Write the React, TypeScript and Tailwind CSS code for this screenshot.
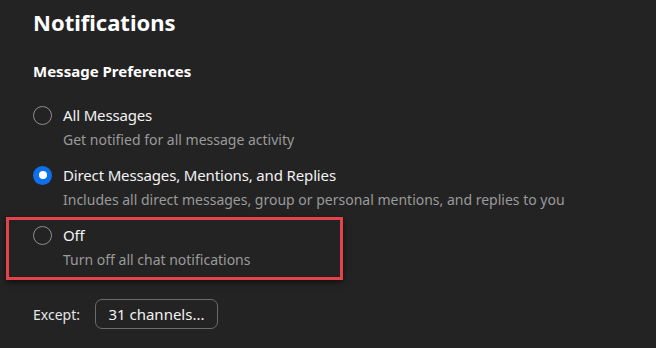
import { useState } from "react";

type Option = {
  id: string;
  label: string;
  hint: string;
};

const options: Option[] = [
  { id: "all", label: "All Messages", hint: "Get notified for all message activity" },
  {
    id: "direct",
    label: "Direct Messages, Mentions, and Replies",
    hint: "Includes all direct messages, group or personal mentions, and replies to you",
  },
  { id: "off", label: "Off", hint: "Turn off all chat notifications" },
];

const Radio = ({ checked }: { checked: boolean }) =>
  checked ? (
    <span className="w-[19px] h-[19px] rounded-full bg-[#0e71eb] flex items-center justify-center shrink-0">
      <span className="w-[8px] h-[8px] rounded-full bg-white" />
    </span>
  ) : (
    <span className="w-[19px] h-[19px] rounded-full border border-[#8f8f8f] shrink-0" />
  );

const App = () => {
  const [value, setValue] = useState("direct");

  return (
    <div className="w-[656px] h-[348px] bg-[#232323] text-white font-['Noto_Sans',sans-serif] pl-[33px] pt-[7px] overflow-hidden">
      <h1 className="text-[22px] font-bold leading-[30px]">Notifications</h1>
      <h2 className="mt-[24px] text-[15px] font-bold leading-[20px]">Message Preferences</h2>

      <div className="mt-[22px] flex flex-col">
        {options.map((opt) => {
          const row = (
            <button
              key={opt.id}
              onClick={() => setValue(opt.id)}
              className="flex flex-col text-left"
            >
              <span className="flex items-center gap-[11px] h-[24px]">
                <Radio checked={value === opt.id} />
                <span className="text-[15px] leading-[20px] text-[#f2f2f2] tracking-[-0.15px]">
                  {opt.label}
                </span>
              </span>
              <span className="pl-[30px] text-[14px] leading-[20px] text-[#9a9a9a] mt-[3px]">
                {opt.hint}
              </span>
            </button>
          );
          if (opt.id === "off") {
            return (
              <div
                key={opt.id}
                className="-ml-[27px] mt-[7px] w-[337px] h-[63px] border-[3px] border-[#e5434a] pl-[24px] pt-[3px] shadow-[0_2px_6px_rgba(0,0,0,0.6)]"
              >
                {row}
              </div>
            );
          }
          return (
            <div key={opt.id} className={opt.id === "all" ? "" : "mt-[13px]"}>
              {row}
            </div>
          );
        })}
      </div>

      <div className="mt-[19px] flex items-center gap-[15px]">
        <span className="text-[14px] text-[#e6e6e6]">Except:</span>
        <button className="h-[30px] w-[123px] rounded-[7px] border border-[#6b6b6b] text-[15px] text-[#f2f2f2]">
          31 channels...
        </button>
      </div>
    </div>
  );
};

export default App;
